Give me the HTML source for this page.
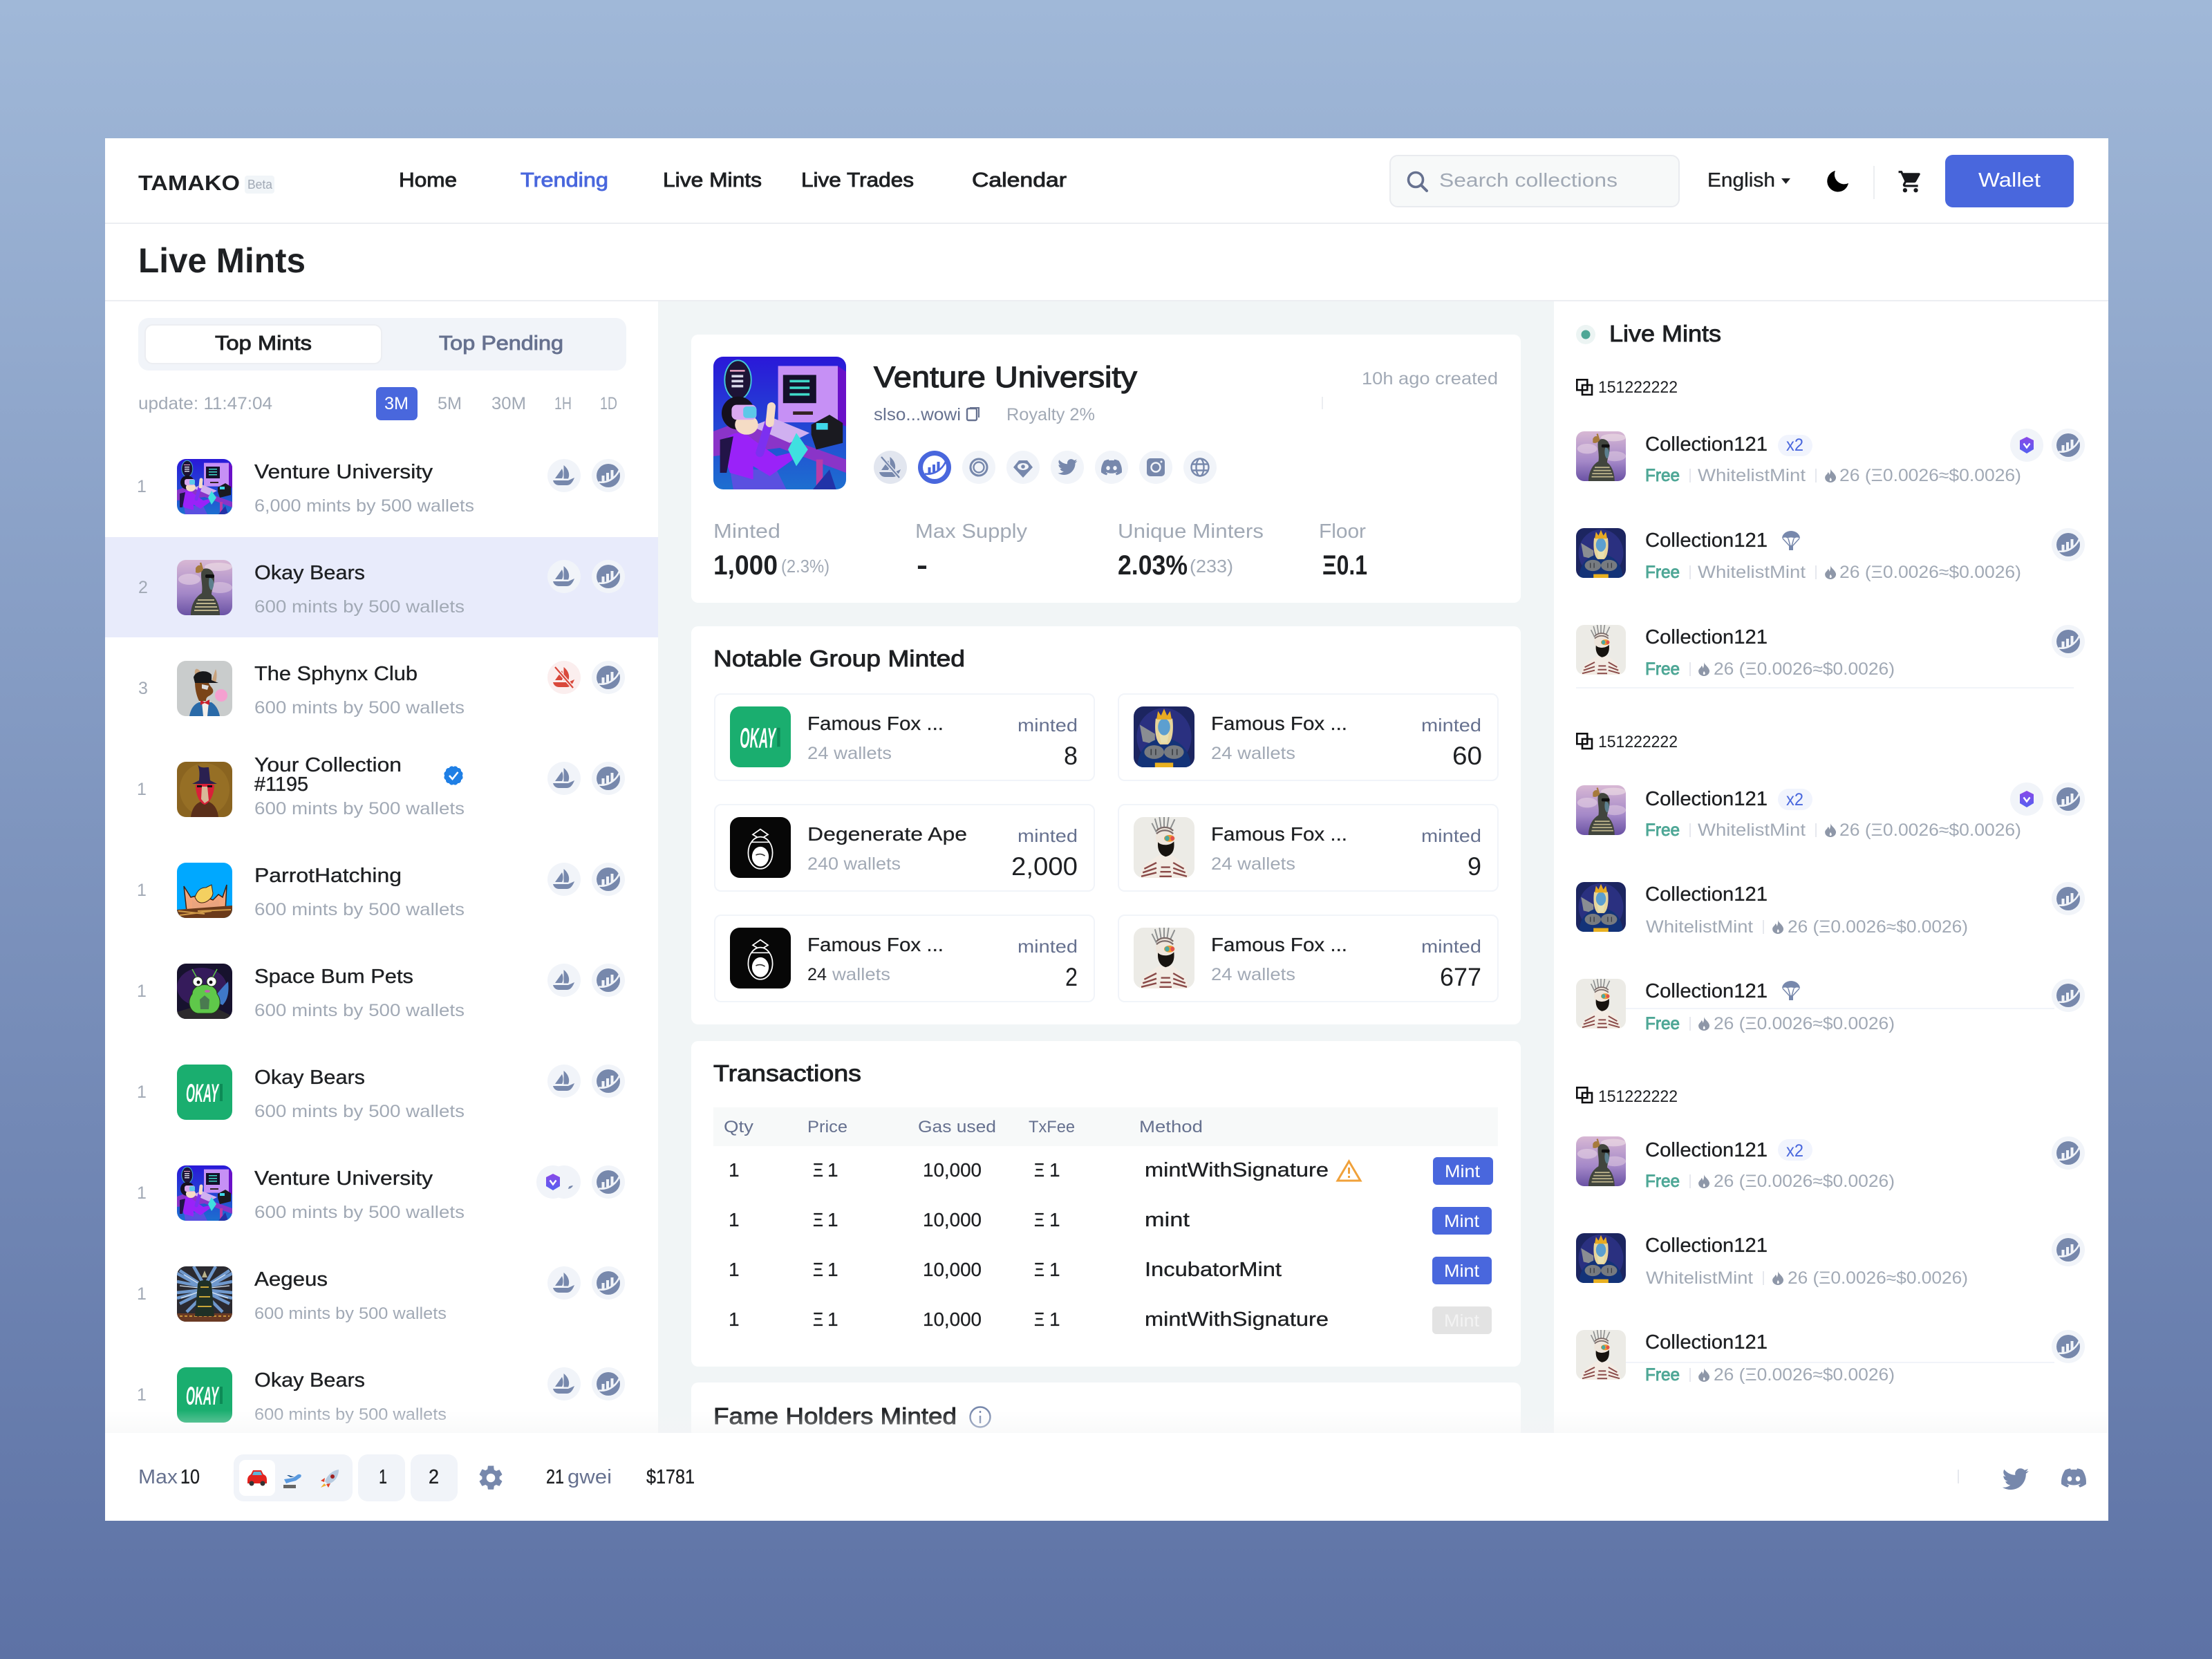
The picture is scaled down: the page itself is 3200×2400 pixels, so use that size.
<!DOCTYPE html>
<html><head><meta charset="utf-8"><title>Tamako Live Mints</title>
<style>
html,body{margin:0;padding:0;background:#7d93bf}
svg{display:block}
text{font-family:"Liberation Sans",sans-serif;white-space:pre}
.d{color:#1e2023;fill:currentColor}
.g{color:#a1a9b5;fill:currentColor}
.s{color:#66718f;fill:currentColor}
.b{color:#4967dd;fill:currentColor}
.w{color:#fff;fill:currentColor}
.n{color:#4ea796;fill:currentColor}
.d.f29{stroke:currentColor;stroke-width:.35px}
.d.f28{stroke:currentColor;stroke-width:.25px}
.m,.d.m{stroke:currentColor;stroke-width:.9px}
.h{font-weight:700}
.f18{font-size:18px}.f24{font-size:24px}.f25{font-size:25px}.f26{font-size:26px}.f28{font-size:28px}.f29{font-size:29px}.f32{font-size:33px}.f36{font-size:37px}.f39{font-size:40px}.f42{font-size:43px}.f49{font-size:50px}
</style></head><body>
<svg xmlns="http://www.w3.org/2000/svg" width="3200" height="2400" viewBox="0 0 3200 2400">
<defs>
<linearGradient id="bg" x1="0" y1="0" x2="0" y2="1"><stop offset="0" stop-color="#a0b8d8"/><stop offset="1" stop-color="#5d72a5"/></linearGradient>
<linearGradient id="fade" x1="0" y1="0" x2="0" y2="1"><stop offset="0" stop-color="#f3f4f5" stop-opacity="0"/><stop offset="1" stop-color="#f3f4f5" stop-opacity=".5"/></linearGradient>
<linearGradient id="gv" x1="0" y1="0" x2="0" y2="1"><stop offset="0" stop-color="#2a18d8"/><stop offset="1" stop-color="#1d6fd0"/></linearGradient>
<linearGradient id="gb" x1="0" y1="0" x2="0" y2="1"><stop offset="0" stop-color="#d8b8d4"/><stop offset=".6" stop-color="#a488c8"/><stop offset="1" stop-color="#6a52a4"/></linearGradient>
<linearGradient id="gp" x1="0" y1="0" x2="0" y2="1"><stop offset="0" stop-color="#8a48e8"/><stop offset="1" stop-color="#5460f0"/></linearGradient>
<clipPath id="c"><rect width="80" height="80" rx="13"/></clipPath>
<clipPath id="cbig"><rect x="1032" y="516" width="192" height="192" rx="14"/></clipPath>

<g id="vu">
<rect width="80" height="80" fill="url(#gv)"/>
<ellipse cx="14.800" cy="14" rx="8" ry="11.800" fill="#1d1336" stroke="#45c8d8" stroke-width=".8"/>
<rect x="10" y="8" width="9" height="1" fill="#f0a8c8"/><rect x="11" y="11" width="7" height="1.500" fill="#d8d8e8"/><rect x="11" y="14" width="7" height="1.500" fill="#d8d8e8"/><rect x="11" y="17" width="7" height="1.500" fill="#d8d8e8"/>
<rect x="39" y="5.600" width="36" height="34" fill="#c690f5"/><polygon points="75,5.600 80,9 80,42 75,40" fill="#6a10c8"/>
<rect x="42" y="11" width="20" height="17" fill="#14102a"/><rect x="46" y="14" width="12" height="1.500" fill="#3fd8c8"/><rect x="46" y="18" width="12" height="1.500" fill="#3fd8c8"/><rect x="46" y="22" width="12" height="1.500" fill="#3fd8c8"/>
<rect x="48" y="33" width="12" height="2" fill="#322"/>
<polygon points="0,45 16,39 80,62 80,70 40,55 0,60" fill="#8a34c8"/><rect x="62" y="62" width="4" height="18" fill="#b83ca8"/>
<polygon points="23,42 36,37 58,46 46,52" fill="#d0b0f0"/>
<polygon points="59,41 70,35 78,40 78,52 62,56 59,47" fill="#1a1a20"/><rect x="62" y="40" width="7" height="4" fill="#3fd8e8"/>
<path d="M10 68L38 68L44 80L12 80Z" fill="#5a50e0"/>
<path d="M5 56C7 44 18 44 24 50L38 60L46 58L48 62L34 72L24 66L24 74L10 70Z" fill="#9a22f8"/>
<path d="M4 50L12 48L8 70L4 70Z" fill="#221448"/>
<circle cx="15" cy="34" r="10" fill="#15101e"/><ellipse cx="20" cy="41" rx="7" ry="6" fill="#f5dcc5"/><rect x="11" y="29" width="15" height="9" rx="3" fill="#d9a8f0"/><rect x="18" y="30" width="8" height="7" rx="2" fill="#5cc8e8"/>
<path d="M28 58L34 38" stroke="#7c30f0" stroke-width="5" stroke-linecap="round"/><path d="M34 40L35 30" stroke="#f5dcc5" stroke-width="5" stroke-linecap="round"/>
<polygon points="50,46 57,56 50,66 45,56" fill="#3fe0e0"/>
<path d="M60 80L70 68L74 80Z" fill="#2233a8"/>
</g>

<symbol id="t-v" viewBox="0 0 80 80"><g clip-path="url(#c)"><use href="#vu"/></g></symbol>

<symbol id="t-b" viewBox="0 0 80 80"><g clip-path="url(#c)">
<rect width="80" height="80" fill="url(#gb)"/>
<ellipse cx="18" cy="28" rx="16" ry="8" fill="#e6d2e4" opacity=".6"/><ellipse cx="62" cy="40" rx="18" ry="8" fill="#e6d2e4" opacity=".5"/><ellipse cx="60" cy="10" rx="20" ry="6" fill="#efe0e6" opacity=".6"/>
<path d="M36 14C46 9 54 16 54 26C54 38 50 44 50 50C58 56 62 68 62 80H20C20 66 26 54 36 48C38 36 33 24 36 14Z" fill="#41453d"/>
<path d="M47 26C54 26 55 38 50 44C46 42 45 32 47 26Z" fill="#5c7f8e"/>
<path d="M27 12C30 6 36 6 38 14C36 18 30 20 27 18Z" fill="#a67a3c"/><path d="M34 4L37 14" stroke="#a67a3c" stroke-width="2.500"/>
<rect x="41" y="21" width="13" height="5" rx="2" fill="#0f0f0f"/>
<path d="M30 58H54M28 63H56M26 68H58M25 73H60" stroke="#bdb48c" stroke-width="2"/>
</g></symbol>

<symbol id="t-s" viewBox="0 0 80 80"><g clip-path="url(#c)">
<rect width="80" height="80" fill="#c9cccc"/>
<path d="M18 80C20 68 26 62 32 60L50 60C56 64 60 70 62 80Z" fill="#2a6aa8"/>
<path d="M36 60L46 60L44 80L38 80Z" fill="#f3eee8"/><path d="M34 56L40 60L47 56L47 64L40 61L34 64Z" fill="#c8202c"/>
<path d="M26 30C28 22 44 22 46 32C48 38 54 40 52 46C48 52 42 50 42 58L32 58C28 50 26 40 26 30Z" fill="#7a4418"/>
<path d="M28 26C24 16 26 10 30 12C34 14 36 18 35 22Z" fill="#c8a27c"/><path d="M50 30L56 12C58 16 58 24 56 32Z" fill="#c8a27c"/>
<path d="M24 24C26 14 44 12 50 20L50 28L60 32L26 32Z" fill="#17181a"/>
<path d="M36 34L46 36L44 42L36 40Z" fill="#ddd"/>
<circle cx="64" cy="50" r="9" fill="#f4a0d0"/>
</g></symbol>

<symbol id="t-w" viewBox="0 0 80 80"><g clip-path="url(#c)">
<rect width="80" height="80" fill="#8a6420"/><ellipse cx="40" cy="40" rx="36" ry="38" fill="#9b7428" opacity=".7"/>
<path d="M20 80C22 64 30 58 40 56C50 58 58 64 60 80Z" fill="#5a2f1a"/>
<path d="M27 34C30 30 50 30 54 34C54 46 48 60 40 62C32 60 27 46 27 34Z" fill="#d92038"/>
<path d="M36 36L44 36L46 56L40 60L35 54Z" fill="#d8b898"/>
<path d="M22 32L58 32L48 27L46 8C40 8 34 10 30 4C34 14 32 24 32 27Z" fill="#2a2050"/>
<rect x="29" y="34" width="7" height="3" fill="#111"/><rect x="44" y="34" width="7" height="3" fill="#111"/>
</g></symbol>

<symbol id="t-p" viewBox="0 0 80 80"><g clip-path="url(#c)">
<rect width="80" height="80" fill="#00a8ff"/>
<path d="M10 34L20 50L28 48L34 56L42 50L52 54L60 46L66 50L72 32L70 70H14Z" fill="#f2a67c" stroke="#3a2010" stroke-width="1.500"/>
<path d="M26 50C30 38 36 36 42 36L50 32L52 44C52 50 44 58 36 58C30 58 28 54 26 50Z" fill="#f4d060" stroke="#3a2010" stroke-width="1"/>
<path d="M22 54C30 62 52 62 60 52L62 66L22 66Z" fill="#eaa47e"/>
<path d="M0 68L80 62V80H0Z" fill="#6b3a1a"/><path d="M2 70L40 74M30 70L78 68M4 76L50 70" stroke="#d09a48" stroke-width="2"/>
</g></symbol>

<symbol id="t-f" viewBox="0 0 80 80"><g clip-path="url(#c)">
<rect width="80" height="80" fill="#17122e"/><ellipse cx="36" cy="34" rx="36" ry="28" fill="#3d1e66" opacity=".8"/>
<path d="M58 44C64 36 70 30 74 26C76 44 72 54 66 60L58 56Z" fill="#3f78c8"/>
<path d="M0 70L20 64L60 66L80 76V80H0Z" fill="#2c2a2c"/>
<path d="M22 44C22 26 58 26 58 44C66 54 62 70 50 72H30C18 70 14 54 22 44Z" fill="#5fc84a" stroke="#1e3a16" stroke-width="1"/>
<path d="M33 52L40 46L47 52L46 66H34Z" fill="#4a7a50"/>
<circle cx="30" cy="26" r="7" fill="#fff" stroke="#1e3a16"/><circle cx="50" cy="26" r="7" fill="#fff" stroke="#1e3a16"/><circle cx="31" cy="27" r="2.500" fill="#111"/><circle cx="49" cy="27" r="2.500" fill="#111"/>
<path d="M28 19L22 8M52 19L58 8" stroke="#5fc84a" stroke-width="1.500"/>
<ellipse cx="44" cy="40" rx="4" ry="2" fill="#c060b0"/>
</g></symbol>

<symbol id="t-o" viewBox="0 0 80 80"><g clip-path="url(#c)">
<rect width="80" height="80" fill="#1aae6f"/>
<text x="13" y="54" font-size="37" font-weight="700" font-style="italic" fill="#fff" textLength="47" lengthAdjust="spacingAndGlyphs">OKAY</text>
<rect x="62" y="28" width="4" height="25" fill="#0d8a56"/>
</g></symbol>

<symbol id="t-a" viewBox="0 0 80 80"><g clip-path="url(#c)">
<rect width="80" height="80" fill="#2b2a30"/>
<g stroke="#6f98cc" stroke-width="4.500" fill="none"><path d="M40 30L4 6M40 30L0 22M40 34L0 38M40 36L4 54M42 38L14 66M40 30L76 6M40 30L80 22M40 34L80 38M40 36L76 54M38 38L66 66M40 28L24 0M40 28L56 0M40 32L0 10M40 32L80 10M40 36L0 46M40 36L80 46"/></g>
<g stroke="#dce8f6" stroke-width="1.200"><path d="M40 30L10 12M40 34L6 46M40 30L70 12M40 34L74 46M40 32L4 28M40 32L76 28"/></g>
<rect x="0" y="68" width="80" height="12" fill="#6a3a24"/><path d="M4 72H76" stroke="#c8943a" stroke-width="2" stroke-dasharray="4 3"/>
<path d="M30 26C30 18 50 18 50 26L54 72H26Z" fill="#1f3026"/><path d="M34 30H46M32 44H48M30 58H50" stroke="#c8a438" stroke-width="2"/><polygon points="40,6 44,16 36,16" fill="#b8b08a"/>
</g></symbol>

<symbol id="t-k" viewBox="0 0 80 80"><g clip-path="url(#c)">
<rect width="80" height="80" fill="#1c2560"/><ellipse cx="40" cy="40" rx="36" ry="38" fill="#2a3080"/>
<polygon points="8,24 28,36 28,50 12,46" fill="#8a8d92"/>
<path d="M5 80C5 54 24 42 40 42C56 42 75 54 75 80Z" fill="#133378"/>
<path d="M29 16C27 30 29 46 35 50H45C51 46 53 30 51 16Z" fill="#e8d59a"/>
<ellipse cx="40" cy="27" rx="8" ry="11" fill="#5c9fd0"/><path d="M33 32C36 40 44 40 47 32L44 48H36Z" fill="#e8e0b0"/>
<polygon points="30,17 32,6 36,12 40,3 44,12 48,6 50,17" fill="#e8aa22"/>
<ellipse cx="27" cy="60" rx="13" ry="9" fill="#777b80"/><ellipse cx="53" cy="60" rx="13" ry="9" fill="#777b80"/><path d="M23 56V64M29 56V64M51 56V64M57 56V64" stroke="#3c3f44" stroke-width="1.500"/>
<rect x="28" y="74" width="24" height="6" fill="#e8b020"/>
</g></symbol>

<symbol id="t-z" viewBox="0 0 80 80"><g clip-path="url(#c)">
<rect width="80" height="80" fill="#ecebe6"/>
<path d="M32 16L28 2M36 14L34 0M40 13V0M44 14L46 0M48 16L54 3M30 20L24 8" stroke="#8e9090" stroke-width="1.800"/>
<path d="M8 80C8 64 24 56 34 50H50C60 56 72 64 72 80Z" fill="#f3ece4"/>
<path d="M14 68L30 60M12 73L30 67M10 78L30 73M66 68L52 60M68 73L52 67M70 78L52 73M34 78H50M35 72H49M36 66H48" stroke="#8a4a48" stroke-width="2.200"/>
<ellipse cx="41" cy="27" rx="12" ry="13" fill="#efe6dc"/>
<path d="M30 22C36 16 46 16 52 22M30 18C36 12 46 12 52 18" stroke="#7a6a68" stroke-width="2" fill="none"/>
<ellipse cx="47" cy="28" rx="7" ry="4.500" fill="#f09a30"/><ellipse cx="44" cy="28" rx="3" ry="3.500" fill="#4aa8a0"/><ellipse cx="51" cy="28" rx="2.500" ry="3" fill="#e05050"/>
<path d="M32 33C36 38 48 38 53 32C54 42 52 50 42 52C34 50 31 42 32 33Z" fill="#17130f"/>
</g></symbol>

<symbol id="t-e" viewBox="0 0 80 80"><g clip-path="url(#c)">
<rect width="80" height="80" fill="#070707"/>
<polygon points="40,16 50,23 40,29 30,23" fill="#070707" stroke="#fff" stroke-width="1.600"/>
<ellipse cx="40" cy="47" rx="16" ry="21" fill="#070707" stroke="#fff" stroke-width="1.600"/>
<ellipse cx="40" cy="52" rx="11" ry="13" fill="#fff"/>
<path d="M34 50Q40 47 46 51" stroke="#333" stroke-width="1.400" fill="none"/><path d="M28 33H52" stroke="#fff" stroke-width="1.400"/>
</g></symbol>

<path id="tw" d="M23 4.600a9 9 0 0 1-2.600.7A4.500 4.500 0 0 0 22.400 2.800a9 9 0 0 1-2.900 1.100A4.500 4.500 0 0 0 11.800 8 12.800 12.800 0 0 1 2.500 3.300a4.500 4.500 0 0 0 1.400 6 4.500 4.500 0 0 1-2-.6v.1a4.500 4.500 0 0 0 3.600 4.400 4.500 4.500 0 0 1-2 .1 4.500 4.500 0 0 0 4.200 3.100A9 9 0 0 1 1 18.300a12.700 12.700 0 0 0 6.900 2c8.300 0 12.800-6.900 12.800-12.800v-.6A9 9 0 0 0 23 4.600z"/>
<path id="dc" d="M20.317 4.370a19.791 19.791 0 0 0-4.885-1.515.074.074 0 0 0-.079.037c-.21.375-.444.864-.608 1.250a18.270 18.270 0 0 0-5.487 0 12.640 12.640 0 0 0-.617-1.250.077.077 0 0 0-.079-.037A19.736 19.736 0 0 0 3.677 4.370a.07.07 0 0 0-.032.027C.533 9.046-.32 13.580.099 18.057a.082.082 0 0 0 .031.057 19.900 19.900 0 0 0 5.993 3.030.078.078 0 0 0 .084-.028 14.090 14.090 0 0 0 1.226-1.994.076.076 0 0 0-.041-.106 13.107 13.107 0 0 1-1.872-.892.077.077 0 0 1-.008-.128 10.200 10.200 0 0 0 .372-.292.074.074 0 0 1 .077-.01c3.928 1.793 8.180 1.793 12.062 0a.074.074 0 0 1 .078.01c.12.098.246.198.373.292a.077.077 0 0 1-.006.127 12.299 12.299 0 0 1-1.873.892.077.077 0 0 0-.041.107c.36.698.772 1.362 1.225 1.993a.076.076 0 0 0 .084.028 19.839 19.839 0 0 0 6.002-3.030.077.077 0 0 0 .032-.054c.5-5.177-.838-9.674-3.549-13.660a.061.061 0 0 0-.031-.03zM8.020 15.330c-1.183 0-2.157-1.085-2.157-2.419 0-1.333.956-2.419 2.157-2.419 1.210 0 2.176 1.096 2.157 2.420 0 1.333-.956 2.418-2.157 2.418zm7.975 0c-1.183 0-2.157-1.085-2.157-2.419 0-1.333.955-2.419 2.157-2.419 1.210 0 2.176 1.096 2.157 2.420 0 1.333-.946 2.418-2.157 2.418z"/>
<g id="boat"><path d="M11 28L21 14C23 19 23 24 21 28Z"/><path d="M23.500 9C30 14 33 22 30 28.500H23.500Z"/><path d="M8 31H30L39 27C37 32 34 38 28 38H17C12 38 9 35 8 31Z"/></g>

<symbol id="os" viewBox="0 0 48 48"><circle cx="24" cy="24" r="24" fill="#f1f4f9"/><use href="#boat" fill="#7788ac"/></symbol>
<symbol id="osr" viewBox="0 0 48 48"><circle cx="24" cy="24" r="24" fill="#fbeeee"/><use href="#boat" fill="#d9483b"/><path d="M11 9L37 39" stroke="#fbeeee" stroke-width="5"/><path d="M11 9L37 39" stroke="#d9483b" stroke-width="2.200"/></symbol>
<symbol id="osg" viewBox="0 0 48 48"><circle cx="24" cy="24" r="24" fill="#e2e6ef"/><use href="#boat" fill="#7788ac"/><path d="M11 9L37 39" stroke="#e2e6ef" stroke-width="5"/><path d="M11 9L37 39" stroke="#7788ac" stroke-width="2.200"/></symbol>
<symbol id="cw" viewBox="0 0 48 48"><circle cx="24" cy="24" r="24" fill="#f1f4f9"/><circle cx="24" cy="24" r="17" fill="#7788ac"/><path d="M14.500 24h4v9h-4zM21 20h4v11h-4zM27.500 16h4v13h-4z" fill="#f1f4f9"/><path d="M10 33.500C22 35 34 29 40 16" stroke="#f1f4f9" stroke-width="2.600" fill="none"/></symbol>
<symbol id="cwb" viewBox="0 0 48 48"><circle cx="24" cy="24" r="24" fill="#4967dd"/><circle cx="24" cy="24" r="17" fill="#fff"/><path d="M14.500 24h4v9h-4zM21 20h4v11h-4zM27.500 16h4v13h-4z" fill="#4967dd"/><path d="M10 33.500C22 35 34 29 40 16" stroke="#4967dd" stroke-width="2.600" fill="none"/></symbol>
<symbol id="sh" viewBox="0 0 48 48"><circle cx="24" cy="24" r="24" fill="#f1f4f9"/><path d="M24 12L34 17V30L24 36L14 30V17Z" fill="url(#gp)"/><path d="M19.500 21.500L24 27.500L28.500 21.500" stroke="#fff" stroke-width="2.400" fill="none"/></symbol>
<symbol id="fl" viewBox="0 0 16 20"><path d="M8 0C9 4 15 7 16 12C16.500 17 12 20 8 20C4 20 -.5 17 .2 12C.8 9 4 8 4.500 5C6 6 6.500 8 6.700 9C8 6 8.500 3 8 0ZM8 13C7 15 6.600 16 7 17.500C8 18.500 9.500 18 9.800 16.500C9.800 15 9 14 8 13Z" fill="#8e97a8" fill-rule="evenodd"/></symbol>
<symbol id="pa" viewBox="0 0 26 28"><path d="M0 11A13 11 0 0 1 26 11C23 9 20 9 18 11C16 9 10 9 8 11C6 9 3 9 0 11Z" fill="#7788ac"/><path d="M1 11L11 22M9 11L12 22M17 11L14 22M25 11L15 22" stroke="#7788ac" stroke-width="1.500"/><rect x="10" y="21" width="6" height="7" fill="#7788ac"/></symbol>
<g id="grp" fill="none" stroke="#0e0e10" stroke-width="2.600"><rect x="1.300" y="1.300" width="15" height="15"/><rect x="9" y="9" width="14" height="14"/></g>
</defs>

<rect width="3200" height="2400" fill="url(#bg)"/>
<rect x="152" y="200" width="2898" height="2000" fill="#fff"/>

<!-- header -->
<text x="200" y="275" textLength="147" lengthAdjust="spacingAndGlyphs" class="d h" font-size="31">TAMAKO</text>
<rect x="354" y="254" width="43" height="26" rx="4" fill="#f1f5f8"/>
<text x="358" y="273" textLength="36" lengthAdjust="spacingAndGlyphs" class="g f18">Beta</text>
<text x="577" y="270" textLength="84" lengthAdjust="spacingAndGlyphs" class="d m f29">Home</text>
<text x="753" y="270" textLength="127" lengthAdjust="spacingAndGlyphs" class="b m f29">Trending</text>
<text x="959" y="270" textLength="143" lengthAdjust="spacingAndGlyphs" class="d m f29">Live Mints</text>
<text x="1159" y="270" textLength="163" lengthAdjust="spacingAndGlyphs" class="d m f29">Live Trades</text>
<text x="1406" y="270" textLength="137" lengthAdjust="spacingAndGlyphs" class="d m f29">Calendar</text>

<rect x="2011" y="225" width="418" height="74" rx="11" fill="#f7f9f9" stroke="#e9ebef" stroke-width="2"/>
<circle cx="2048" cy="260" r="10.500" fill="none" stroke="#66718f" stroke-width="3.600"/><path d="M2056 268L2064 276" stroke="#66718f" stroke-width="4" stroke-linecap="round"/>
<text x="2082" y="270" textLength="258" lengthAdjust="spacingAndGlyphs" class="g f28">Search collections</text>
<text x="2470" y="270" textLength="98" lengthAdjust="spacingAndGlyphs" class="d f29">English</text>
<path d="M2577 258H2590L2583.500 266Z" fill="#1e2023"/>
<path d="M2655 247A15.500 15.500 0 1 0 2674 265A14 14 0 0 1 2655 247Z" fill="#000"/>
<rect x="2710" y="240" width="2" height="48" fill="#eceef1"/>
<path transform="translate(2745 244) scale(1.560)" fill="#17181c" d="M7 18c-1.100 0-1.990.9-1.990 2S5.900 22 7 22s2-.9 2-2-.9-2-2-2zM1 2v2h2l3.600 7.590-1.350 2.450c-.16.28-.25.61-.25.96 0 1.100.9 2 2 2h12v-2H7.420c-.14 0-.25-.11-.25-.25l.03-.12.9-1.630h7.450c.75 0 1.410-.41 1.750-1.030l3.580-6.470A1 1 0 0 0 20 4H5.210l-.94-2H1zm16 16c-1.100 0-1.990.9-1.990 2s.89 2 1.990 2 2-.9 2-2-.9-2-2-2z"/>
<rect x="2814" y="224" width="186" height="76" rx="11" fill="#4967dd"/>
<text x="2862" y="270" textLength="90" lengthAdjust="spacingAndGlyphs" class="w f29">Wallet</text>

<rect x="152" y="322" width="2898" height="2" fill="#eceef2"/>
<text x="200" y="394" textLength="242" lengthAdjust="spacingAndGlyphs" class="d h f49">Live Mints</text>
<rect x="152" y="434" width="2898" height="2" fill="#eceef2"/>

<!-- middle bg -->
<rect x="952" y="436" width="1296" height="1640" fill="#f1f5f6"/>

<!-- left column -->
<rect x="200" y="460" width="706" height="76" rx="15" fill="#f1f4f9"/>
<rect x="210" y="470" width="342" height="56" rx="11" fill="#fff" stroke="#eceef2" stroke-width="2"/>
<text x="311" y="506" textLength="140" lengthAdjust="spacingAndGlyphs" class="d m f29">Top Mints</text>
<text x="635" y="506" textLength="180" lengthAdjust="spacingAndGlyphs" class="s m f29">Top Pending</text>
<text x="200" y="592" textLength="194" lengthAdjust="spacingAndGlyphs" class="g f25">update: 11:47:04</text>
<rect x="544" y="560" width="60" height="48" rx="7" fill="#4967dd"/>
<text x="556" y="592" textLength="35" lengthAdjust="spacingAndGlyphs" class="w f25">3M</text>
<text x="633" y="592" textLength="35" lengthAdjust="spacingAndGlyphs" class="g f25">5M</text>
<text x="711" y="592" textLength="50" lengthAdjust="spacingAndGlyphs" class="g f25">30M</text>
<text x="802" y="592" textLength="25" lengthAdjust="spacingAndGlyphs" class="g f25">1H</text>
<text x="868" y="592" textLength="25" lengthAdjust="spacingAndGlyphs" class="g f25">1D</text>

<rect x="152" y="777" width="800" height="145" fill="#e8ebfb"/>

<text x="198" y="712" class="g f25">1</text>
<use href="#t-v" x="256" y="664" width="80" height="80"/>
<text x="368" y="692" textLength="258" lengthAdjust="spacingAndGlyphs" class="d f29">Venture University</text>
<text x="368" y="740" textLength="318" lengthAdjust="spacingAndGlyphs" class="g f25">6,000 mints by 500 wallets</text>
<use href="#os" x="792" y="664" width="48" height="48"/><use href="#cw" x="856" y="664" width="48" height="48"/>

<text x="200" y="858" class="g f25">2</text>
<use href="#t-b" x="256" y="810" width="80" height="80"/>
<text x="368" y="838" textLength="160" lengthAdjust="spacingAndGlyphs" class="d f29">Okay Bears</text>
<text x="368" y="886" textLength="304" lengthAdjust="spacingAndGlyphs" class="g f25">600 mints by 500 wallets</text>
<use href="#os" x="792" y="810" width="48" height="48"/><use href="#cw" x="856" y="810" width="48" height="48"/>

<text x="200" y="1004" class="g f25">3</text>
<use href="#t-s" x="256" y="956" width="80" height="80"/>
<text x="368" y="984" textLength="236" lengthAdjust="spacingAndGlyphs" class="d f29">The Sphynx Club</text>
<text x="368" y="1032" textLength="304" lengthAdjust="spacingAndGlyphs" class="g f25">600 mints by 500 wallets</text>
<use href="#osr" x="792" y="956" width="48" height="48"/><use href="#cw" x="856" y="956" width="48" height="48"/>

<text x="198" y="1150" class="g f25">1</text>
<use href="#t-w" x="256" y="1102" width="80" height="80"/>
<text x="368" y="1116" textLength="213" lengthAdjust="spacingAndGlyphs" class="d f29">Your Collection</text>
<text x="368" y="1144" textLength="78" lengthAdjust="spacingAndGlyphs" class="d f29">#1195</text>
<g fill="#1f7fe5"><rect x="645" y="1111" width="22" height="22" rx="4"/><rect x="645" y="1111" width="22" height="22" rx="4" transform="rotate(30 656 1122)"/><rect x="645" y="1111" width="22" height="22" rx="4" transform="rotate(60 656 1122)"/></g>
<path d="M650 1122L654.500 1127L662.500 1117" stroke="#fff" stroke-width="2.600" fill="none"/>
<text x="368" y="1178" textLength="304" lengthAdjust="spacingAndGlyphs" class="g f25">600 mints by 500 wallets</text>
<use href="#os" x="792" y="1102" width="48" height="48"/><use href="#cw" x="856" y="1102" width="48" height="48"/>

<text x="198" y="1296" class="g f25">1</text>
<use href="#t-p" x="256" y="1248" width="80" height="80"/>
<text x="368" y="1276" textLength="213" lengthAdjust="spacingAndGlyphs" class="d f29">ParrotHatching</text>
<text x="368" y="1324" textLength="304" lengthAdjust="spacingAndGlyphs" class="g f25">600 mints by 500 wallets</text>
<use href="#os" x="792" y="1248" width="48" height="48"/><use href="#cw" x="856" y="1248" width="48" height="48"/>

<text x="198" y="1442" class="g f25">1</text>
<use href="#t-f" x="256" y="1394" width="80" height="80"/>
<text x="368" y="1422" textLength="230" lengthAdjust="spacingAndGlyphs" class="d f29">Space Bum Pets</text>
<text x="368" y="1470" textLength="304" lengthAdjust="spacingAndGlyphs" class="g f25">600 mints by 500 wallets</text>
<use href="#os" x="792" y="1394" width="48" height="48"/><use href="#cw" x="856" y="1394" width="48" height="48"/>

<text x="198" y="1588" class="g f25">1</text>
<use href="#t-o" x="256" y="1540" width="80" height="80"/>
<text x="368" y="1568" textLength="160" lengthAdjust="spacingAndGlyphs" class="d f29">Okay Bears</text>
<text x="368" y="1616" textLength="304" lengthAdjust="spacingAndGlyphs" class="g f25">600 mints by 500 wallets</text>
<use href="#os" x="792" y="1540" width="48" height="48"/><use href="#cw" x="856" y="1540" width="48" height="48"/>

<text x="198" y="1734" class="g f25">1</text>
<use href="#t-v" x="256" y="1686" width="80" height="80"/>
<text x="368" y="1714" textLength="258" lengthAdjust="spacingAndGlyphs" class="d f29">Venture University</text>
<text x="368" y="1762" textLength="304" lengthAdjust="spacingAndGlyphs" class="g f25">600 mints by 500 wallets</text>
<circle cx="816" cy="1710" r="24" fill="#f1f4f9"/><path d="M820 1720Q823 1715 829 1715Q827 1720 820 1720Z" fill="#7788ac"/>
<use href="#sh" x="776" y="1686" width="48" height="48"/><use href="#cw" x="856" y="1686" width="48" height="48"/>

<text x="198" y="1880" class="g f25">1</text>
<use href="#t-a" x="256" y="1832" width="80" height="80"/>
<text x="368" y="1860" textLength="106" lengthAdjust="spacingAndGlyphs" class="d f29">Aegeus</text>
<text x="368" y="1908" textLength="278" lengthAdjust="spacingAndGlyphs" class="g f24">600 mints by 500 wallets</text>
<use href="#os" x="792" y="1832" width="48" height="48"/><use href="#cw" x="856" y="1832" width="48" height="48"/>

<text x="198" y="2026" class="g f25">1</text>
<use href="#t-o" x="256" y="1978" width="80" height="80"/>
<text x="368" y="2006" textLength="160" lengthAdjust="spacingAndGlyphs" class="d f29">Okay Bears</text>
<text x="368" y="2054" textLength="278" lengthAdjust="spacingAndGlyphs" class="g f24">600 mints by 500 wallets</text>
<use href="#os" x="792" y="1978" width="48" height="48"/><use href="#cw" x="856" y="1978" width="48" height="48"/>

<!-- card 1 -->
<rect x="1000" y="484" width="1200" height="388" rx="10" fill="#fff"/>
<g clip-path="url(#cbig)"><use href="#vu" transform="translate(1032 516) scale(2.400)"/></g>
<text x="1264" y="560" textLength="381" lengthAdjust="spacingAndGlyphs" class="d m f42" style="stroke-width:1.200px">Venture University</text>
<text x="1264" y="608" textLength="126" lengthAdjust="spacingAndGlyphs" class="s f25">slso...wowi</text>
<rect x="1399" y="591" width="14" height="17" rx="2" fill="none" stroke="#66718f" stroke-width="2.400"/><path d="M1403 590H1416V604" fill="none" stroke="#66718f" stroke-width="2"/>
<text x="1456" y="608" textLength="128" lengthAdjust="spacingAndGlyphs" class="g f25">Royalty 2%</text>
<text x="1970" y="556" textLength="197" lengthAdjust="spacingAndGlyphs" class="g f25">10h ago created</text>
<rect x="1912" y="574" width="2" height="18" fill="#eceef1"/>

<use href="#osg" x="1264" y="652" width="48" height="48"/>
<use href="#cwb" x="1328" y="652" width="48" height="48"/>
<circle cx="1416" cy="676" r="24" fill="#f1f4f9"/><circle cx="1416" cy="676" r="12" fill="none" stroke="#7788ac" stroke-width="3"/><circle cx="1416" cy="676" r="7.500" fill="none" stroke="#7788ac" stroke-width="2.400"/><path d="M1404 676A12 12 0 0 0 1416 688" stroke="#7788ac" stroke-width="3" fill="none"/>
<circle cx="1480" cy="676" r="24" fill="#f1f4f9"/><path d="M1466 676L1474 666H1486L1494 676L1480 691Z" fill="#7788ac"/><ellipse cx="1480" cy="675" rx="8" ry="5" fill="#f1f4f9"/><circle cx="1480" cy="675" r="2.800" fill="#7788ac"/>
<circle cx="1544" cy="676" r="24" fill="#f1f4f9"/><use href="#tw" transform="translate(1529 661) scale(1.280)" fill="#7788ac"/>
<circle cx="1608" cy="676" r="24" fill="#f1f4f9"/><use href="#dc" transform="translate(1593 661) scale(1.250)" fill="#7788ac"/>
<circle cx="1672" cy="676" r="24" fill="#f1f4f9"/><rect x="1659" y="663" width="26" height="26" rx="5" fill="#7788ac"/><circle cx="1672" cy="676" r="6.500" fill="none" stroke="#f1f4f9" stroke-width="2.400"/><circle cx="1680" cy="668" r="1.500" fill="#f1f4f9"/>
<circle cx="1736" cy="676" r="24" fill="#f1f4f9"/><g fill="none" stroke="#7788ac" stroke-width="2.400"><circle cx="1736" cy="676" r="12.500"/><ellipse cx="1736" cy="676" rx="5.500" ry="12.500"/><path d="M1724 671.500H1748M1724 680.500H1748"/></g>

<text x="1032" y="778" textLength="97" lengthAdjust="spacingAndGlyphs" class="g f29">Minted</text>
<text x="1324" y="778" textLength="162" lengthAdjust="spacingAndGlyphs" class="g f29">Max Supply</text>
<text x="1617" y="778" textLength="211" lengthAdjust="spacingAndGlyphs" class="g f29">Unique Minters</text>
<text x="1908" y="778" textLength="68" lengthAdjust="spacingAndGlyphs" class="g f29">Floor</text>
<text x="1032" y="831" textLength="93" lengthAdjust="spacingAndGlyphs" class="d h f39">1,000</text>
<text x="1130" y="828" textLength="70" lengthAdjust="spacingAndGlyphs" class="g f26">(2.3%)</text>
<text x="1326" y="831" textLength="16" lengthAdjust="spacingAndGlyphs" class="d h f39">-</text>
<text x="1617" y="831" textLength="101" lengthAdjust="spacingAndGlyphs" class="d h f39">2.03%</text>
<text x="1721" y="828" textLength="63" lengthAdjust="spacingAndGlyphs" class="g f26">(233)</text>
<text x="1913" y="831" textLength="65" lengthAdjust="spacingAndGlyphs" class="d h f39">Ξ0.1</text>

<!-- notable -->
<rect x="1000" y="906" width="1200" height="576" rx="10" fill="#fff"/>
<text x="1032" y="964" textLength="364" lengthAdjust="spacingAndGlyphs" class="d m f32">Notable Group Minted</text>
<g fill="#fff" stroke="#f1f4f9" stroke-width="2">
<rect x="1034" y="1004" width="549" height="125" rx="9"/><rect x="1618" y="1004" width="549" height="125" rx="9"/>
<rect x="1034" y="1164" width="549" height="125" rx="9"/><rect x="1618" y="1164" width="549" height="125" rx="9"/>
<rect x="1034" y="1324" width="549" height="125" rx="9"/><rect x="1618" y="1324" width="549" height="125" rx="9"/>
</g>
<use href="#t-o" x="1056" y="1022" width="88" height="88"/>
<text x="1168" y="1056" textLength="197" lengthAdjust="spacingAndGlyphs" class="d f28">Famous Fox ...</text>
<text x="1168" y="1098" textLength="122" lengthAdjust="spacingAndGlyphs" class="g f25">24 wallets</text>
<text x="1472" y="1058" textLength="87" lengthAdjust="spacingAndGlyphs" class="s f26">minted</text>
<text x="1539" y="1106" textLength="20" lengthAdjust="spacingAndGlyphs" class="d f36">8</text>

<use href="#t-k" x="1640" y="1022" width="88" height="88"/>
<text x="1752" y="1056" textLength="197" lengthAdjust="spacingAndGlyphs" class="d f28">Famous Fox ...</text>
<text x="1752" y="1098" textLength="122" lengthAdjust="spacingAndGlyphs" class="g f25">24 wallets</text>
<text x="2056" y="1058" textLength="87" lengthAdjust="spacingAndGlyphs" class="s f26">minted</text>
<text x="2101" y="1106" textLength="43" lengthAdjust="spacingAndGlyphs" class="d f36">60</text>

<use href="#t-e" x="1056" y="1182" width="88" height="88"/>
<text x="1168" y="1216" textLength="231" lengthAdjust="spacingAndGlyphs" class="d f28">Degenerate Ape</text>
<text x="1168" y="1258" textLength="135" lengthAdjust="spacingAndGlyphs" class="g f25">240 wallets</text>
<text x="1472" y="1218" textLength="87" lengthAdjust="spacingAndGlyphs" class="s f26">minted</text>
<text x="1463" y="1266" textLength="96" lengthAdjust="spacingAndGlyphs" class="d f36">2,000</text>

<use href="#t-z" x="1640" y="1182" width="88" height="88"/>
<text x="1752" y="1216" textLength="197" lengthAdjust="spacingAndGlyphs" class="d f28">Famous Fox ...</text>
<text x="1752" y="1258" textLength="122" lengthAdjust="spacingAndGlyphs" class="g f25">24 wallets</text>
<text x="2056" y="1218" textLength="87" lengthAdjust="spacingAndGlyphs" class="s f26">minted</text>
<text x="2123" y="1266" textLength="20" lengthAdjust="spacingAndGlyphs" class="d f36">9</text>

<use href="#t-e" x="1056" y="1342" width="88" height="88"/>
<text x="1168" y="1376" textLength="197" lengthAdjust="spacingAndGlyphs" class="d f28">Famous Fox ...</text>
<text x="1168" y="1418" textLength="28" lengthAdjust="spacingAndGlyphs" class="d f25">24</text>
<text x="1204" y="1418" textLength="84" lengthAdjust="spacingAndGlyphs" class="g f25">wallets</text>
<text x="1472" y="1378" textLength="87" lengthAdjust="spacingAndGlyphs" class="s f26">minted</text>
<text x="1541" y="1426" textLength="18" lengthAdjust="spacingAndGlyphs" class="d f36">2</text>

<use href="#t-z" x="1640" y="1342" width="88" height="88"/>
<text x="1752" y="1376" textLength="197" lengthAdjust="spacingAndGlyphs" class="d f28">Famous Fox ...</text>
<text x="1752" y="1418" textLength="122" lengthAdjust="spacingAndGlyphs" class="g f25">24 wallets</text>
<text x="2056" y="1378" textLength="87" lengthAdjust="spacingAndGlyphs" class="s f26">minted</text>
<text x="2083" y="1426" textLength="60" lengthAdjust="spacingAndGlyphs" class="d f36">677</text>

<!-- transactions -->
<rect x="1000" y="1506" width="1200" height="471" rx="10" fill="#fff"/>
<text x="1032" y="1564" textLength="214" lengthAdjust="spacingAndGlyphs" class="d m f32">Transactions</text>
<rect x="1032" y="1602" width="1135" height="56" fill="#f7f9f9"/>
<text x="1047" y="1638" textLength="43" lengthAdjust="spacingAndGlyphs" class="s f24">Qty</text>
<text x="1168" y="1638" textLength="58" lengthAdjust="spacingAndGlyphs" class="s f24">Price</text>
<text x="1328" y="1638" textLength="113" lengthAdjust="spacingAndGlyphs" class="s f24">Gas used</text>
<text x="1488" y="1638" textLength="67" lengthAdjust="spacingAndGlyphs" class="s f24">TxFee</text>
<text x="1648" y="1638" textLength="92" lengthAdjust="spacingAndGlyphs" class="s f24">Method</text>

<text x="1054" y="1702" class="d f28">1</text><text x="1176" y="1702" textLength="15" lengthAdjust="spacingAndGlyphs" class="d f28">Ξ</text><text x="1197" y="1702" class="d f28">1</text><text x="1335" y="1702" textLength="85" lengthAdjust="spacingAndGlyphs" class="d f28">10,000</text><text x="1496" y="1702" textLength="15" lengthAdjust="spacingAndGlyphs" class="d f28">Ξ</text><text x="1518" y="1702" class="d f28">1</text>
<text x="1656" y="1702" textLength="266" lengthAdjust="spacingAndGlyphs" class="d f29">mintWithSignature</text>
<path d="M1951.500 1680L1968 1708H1935Z" fill="none" stroke="#f0a13a" stroke-width="3"/><path d="M1951.500 1689V1698M1951.500 1701V1704" stroke="#f0a13a" stroke-width="3"/>
<rect x="2073" y="1674" width="87" height="40" rx="6" fill="#4967dd"/><text x="2090" y="1703" textLength="51" lengthAdjust="spacingAndGlyphs" class="w f25">Mint</text>

<text x="1054" y="1774" class="d f28">1</text><text x="1176" y="1774" textLength="15" lengthAdjust="spacingAndGlyphs" class="d f28">Ξ</text><text x="1197" y="1774" class="d f28">1</text><text x="1335" y="1774" textLength="85" lengthAdjust="spacingAndGlyphs" class="d f28">10,000</text><text x="1496" y="1774" textLength="15" lengthAdjust="spacingAndGlyphs" class="d f28">Ξ</text><text x="1518" y="1774" class="d f28">1</text>
<text x="1656" y="1774" textLength="65" lengthAdjust="spacingAndGlyphs" class="d f29">mint</text>
<rect x="2072" y="1746" width="86" height="40" rx="6" fill="#4967dd"/><text x="2089" y="1775" textLength="51" lengthAdjust="spacingAndGlyphs" class="w f25">Mint</text>

<text x="1054" y="1846" class="d f28">1</text><text x="1176" y="1846" textLength="15" lengthAdjust="spacingAndGlyphs" class="d f28">Ξ</text><text x="1197" y="1846" class="d f28">1</text><text x="1335" y="1846" textLength="85" lengthAdjust="spacingAndGlyphs" class="d f28">10,000</text><text x="1496" y="1846" textLength="15" lengthAdjust="spacingAndGlyphs" class="d f28">Ξ</text><text x="1518" y="1846" class="d f28">1</text>
<text x="1656" y="1846" textLength="198" lengthAdjust="spacingAndGlyphs" class="d f29">IncubatorMint</text>
<rect x="2072" y="1818" width="86" height="40" rx="6" fill="#4967dd"/><text x="2089" y="1847" textLength="51" lengthAdjust="spacingAndGlyphs" class="w f25">Mint</text>

<text x="1054" y="1918" class="d f28">1</text><text x="1176" y="1918" textLength="15" lengthAdjust="spacingAndGlyphs" class="d f28">Ξ</text><text x="1197" y="1918" class="d f28">1</text><text x="1335" y="1918" textLength="85" lengthAdjust="spacingAndGlyphs" class="d f28">10,000</text><text x="1496" y="1918" textLength="15" lengthAdjust="spacingAndGlyphs" class="d f28">Ξ</text><text x="1518" y="1918" class="d f28">1</text>
<text x="1656" y="1918" textLength="266" lengthAdjust="spacingAndGlyphs" class="d f29">mintWithSignature</text>
<rect x="2072" y="1890" width="86" height="40" rx="6" fill="#e3e3e3"/><text x="2089" y="1919" textLength="51" lengthAdjust="spacingAndGlyphs" fill="#f3f3f3" class="f25">Mint</text>

<!-- fame -->
<rect x="1000" y="2000" width="1200" height="80" rx="10" fill="#fff"/>
<text x="1032" y="2060" textLength="352" lengthAdjust="spacingAndGlyphs" class="d m f32">Fame Holders Minted</text>
<circle cx="1418" cy="2050" r="14.500" fill="none" stroke="#7788ac" stroke-width="2.400"/><path d="M1418 2048V2059M1418 2041V2044" stroke="#7788ac" stroke-width="2.400"/>

<!-- right panel -->
<circle cx="2294" cy="484" r="14" fill="#ecf4f3"/><circle cx="2294" cy="484" r="6.500" fill="#4ea796"/>
<text x="2328" y="494" textLength="162" lengthAdjust="spacingAndGlyphs" class="d m f32">Live Mints</text>

<use href="#grp" transform="translate(2280 548)"/>
<text x="2312" y="568" textLength="115" lengthAdjust="spacingAndGlyphs" class="d f24">151222222</text>

<use href="#t-b" x="2280" y="624" width="72" height="72"/>
<text x="2380" y="652" textLength="177" lengthAdjust="spacingAndGlyphs" class="d f29">Collection121</text>
<rect x="2572" y="629" width="50" height="31" rx="15.500" fill="#f1f4fd"/><text x="2584" y="652" textLength="25" lengthAdjust="spacingAndGlyphs" class="b f25">x2</text>
<use href="#sh" x="2908" y="620" width="48" height="48"/><use href="#cw" x="2968" y="620" width="48" height="48"/>
<text x="2380" y="696" textLength="50" lengthAdjust="spacingAndGlyphs" class="n m f25">Free</text><rect x="2444" y="678" width="2" height="20" fill="#e6e8ee"/>
<text x="2456" y="696" textLength="156" lengthAdjust="spacingAndGlyphs" class="g f25">WhitelistMint</text><rect x="2626" y="678" width="2" height="20" fill="#e6e8ee"/>
<use href="#fl" x="2640" y="678" width="16" height="20"/><text x="2661" y="696" textLength="263" lengthAdjust="spacingAndGlyphs" class="g f25">26 (Ξ0.0026≈$0.0026)</text>

<use href="#t-k" x="2280" y="764" width="72" height="72"/>
<text x="2380" y="791" textLength="177" lengthAdjust="spacingAndGlyphs" class="d f29">Collection121</text>
<use href="#pa" x="2578" y="768" width="26" height="28"/>
<use href="#cw" x="2968" y="764" width="48" height="48"/>
<text x="2380" y="836" textLength="50" lengthAdjust="spacingAndGlyphs" class="n m f25">Free</text><rect x="2444" y="818" width="2" height="20" fill="#e6e8ee"/>
<text x="2456" y="836" textLength="156" lengthAdjust="spacingAndGlyphs" class="g f25">WhitelistMint</text><rect x="2626" y="818" width="2" height="20" fill="#e6e8ee"/>
<use href="#fl" x="2640" y="818" width="16" height="20"/><text x="2661" y="836" textLength="263" lengthAdjust="spacingAndGlyphs" class="g f25">26 (Ξ0.0026≈$0.0026)</text>

<use href="#t-z" x="2280" y="904" width="72" height="72"/>
<text x="2380" y="931" textLength="177" lengthAdjust="spacingAndGlyphs" class="d f29">Collection121</text>
<use href="#cw" x="2968" y="904" width="48" height="48"/>
<text x="2380" y="976" textLength="50" lengthAdjust="spacingAndGlyphs" class="n m f25">Free</text><rect x="2444" y="958" width="2" height="20" fill="#e6e8ee"/>
<use href="#fl" x="2457" y="958" width="16" height="20"/><text x="2479" y="976" textLength="262" lengthAdjust="spacingAndGlyphs" class="g f25">26 (Ξ0.0026≈$0.0026)</text>
<rect x="2280" y="994" width="720" height="2" fill="#f1f4f9"/>

<use href="#grp" transform="translate(2280 1060)"/>
<text x="2312" y="1081" textLength="115" lengthAdjust="spacingAndGlyphs" class="d f24">151222222</text>

<use href="#t-b" x="2280" y="1136" width="72" height="72"/>
<text x="2380" y="1165" textLength="177" lengthAdjust="spacingAndGlyphs" class="d f29">Collection121</text>
<rect x="2572" y="1141" width="50" height="31" rx="15.500" fill="#f1f4fd"/><text x="2584" y="1165" textLength="25" lengthAdjust="spacingAndGlyphs" class="b f25">x2</text>
<use href="#sh" x="2908" y="1132" width="48" height="48"/><use href="#cw" x="2968" y="1132" width="48" height="48"/>
<text x="2380" y="1209" textLength="50" lengthAdjust="spacingAndGlyphs" class="n m f25">Free</text><rect x="2444" y="1191" width="2" height="20" fill="#e6e8ee"/>
<text x="2456" y="1209" textLength="156" lengthAdjust="spacingAndGlyphs" class="g f25">WhitelistMint</text><rect x="2626" y="1191" width="2" height="20" fill="#e6e8ee"/>
<use href="#fl" x="2640" y="1191" width="16" height="20"/><text x="2661" y="1209" textLength="263" lengthAdjust="spacingAndGlyphs" class="g f25">26 (Ξ0.0026≈$0.0026)</text>

<use href="#t-k" x="2280" y="1276" width="72" height="72"/>
<text x="2380" y="1303" textLength="177" lengthAdjust="spacingAndGlyphs" class="d f29">Collection121</text>
<use href="#cw" x="2968" y="1276" width="48" height="48"/>
<text x="2381" y="1349" textLength="155" lengthAdjust="spacingAndGlyphs" class="g f25">WhitelistMint</text><rect x="2550" y="1331" width="2" height="20" fill="#e6e8ee"/>
<use href="#fl" x="2564" y="1331" width="16" height="20"/><text x="2586" y="1349" textLength="261" lengthAdjust="spacingAndGlyphs" class="g f25">26 (Ξ0.0026≈$0.0026)</text>

<rect x="2352" y="1458" width="620" height="2" fill="#f1f4f9"/>
<use href="#t-z" x="2280" y="1416" width="72" height="72"/>
<text x="2380" y="1443" textLength="177" lengthAdjust="spacingAndGlyphs" class="d f29">Collection121</text>
<use href="#pa" x="2578" y="1419" width="26" height="28"/>
<use href="#cw" x="2968" y="1416" width="48" height="48"/>
<text x="2380" y="1489" textLength="50" lengthAdjust="spacingAndGlyphs" class="n m f25">Free</text><rect x="2444" y="1471" width="2" height="20" fill="#e6e8ee"/>
<use href="#fl" x="2457" y="1471" width="16" height="20"/><text x="2479" y="1489" textLength="262" lengthAdjust="spacingAndGlyphs" class="g f25">26 (Ξ0.0026≈$0.0026)</text>

<use href="#grp" transform="translate(2280 1572)"/>
<text x="2312" y="1594" textLength="115" lengthAdjust="spacingAndGlyphs" class="d f24">151222222</text>

<use href="#t-b" x="2280" y="1644" width="72" height="72"/>
<text x="2380" y="1673" textLength="177" lengthAdjust="spacingAndGlyphs" class="d f29">Collection121</text>
<rect x="2572" y="1648" width="50" height="31" rx="15.500" fill="#f1f4fd"/><text x="2584" y="1673" textLength="25" lengthAdjust="spacingAndGlyphs" class="b f25">x2</text>
<use href="#cw" x="2968" y="1644" width="48" height="48"/>
<text x="2380" y="1717" textLength="50" lengthAdjust="spacingAndGlyphs" class="n m f25">Free</text><rect x="2444" y="1699" width="2" height="20" fill="#e6e8ee"/>
<use href="#fl" x="2457" y="1699" width="16" height="20"/><text x="2479" y="1717" textLength="262" lengthAdjust="spacingAndGlyphs" class="g f25">26 (Ξ0.0026≈$0.0026)</text>

<use href="#t-k" x="2280" y="1784" width="72" height="72"/>
<text x="2380" y="1811" textLength="177" lengthAdjust="spacingAndGlyphs" class="d f29">Collection121</text>
<use href="#cw" x="2968" y="1784" width="48" height="48"/>
<text x="2381" y="1857" textLength="155" lengthAdjust="spacingAndGlyphs" class="g f25">WhitelistMint</text><rect x="2550" y="1839" width="2" height="20" fill="#e6e8ee"/>
<use href="#fl" x="2564" y="1839" width="16" height="20"/><text x="2586" y="1857" textLength="261" lengthAdjust="spacingAndGlyphs" class="g f25">26 (Ξ0.0026≈$0.0026)</text>

<rect x="2352" y="1970" width="620" height="2" fill="#f1f4f9"/>
<use href="#t-z" x="2280" y="1924" width="72" height="72"/>
<text x="2380" y="1951" textLength="177" lengthAdjust="spacingAndGlyphs" class="d f29">Collection121</text>
<use href="#cw" x="2968" y="1924" width="48" height="48"/>
<text x="2380" y="1997" textLength="50" lengthAdjust="spacingAndGlyphs" class="n m f25">Free</text><rect x="2444" y="1979" width="2" height="20" fill="#e6e8ee"/>
<use href="#fl" x="2457" y="1979" width="16" height="20"/><text x="2479" y="1997" textLength="262" lengthAdjust="spacingAndGlyphs" class="g f25">26 (Ξ0.0026≈$0.0026)</text>

<!-- bottom fade + footer -->
<rect x="152" y="2040" width="2898" height="33" fill="url(#fade)"/>
<rect x="152" y="2073" width="2898" height="127" fill="#fff"/>
<text x="200" y="2146" textLength="57" lengthAdjust="spacingAndGlyphs" class="s f29">Max</text>
<text x="261" y="2146" textLength="28" lengthAdjust="spacingAndGlyphs" class="d f29">10</text>
<rect x="338" y="2104" width="172" height="68" rx="14" fill="#f1f4f9"/>
<rect x="346" y="2112" width="52" height="52" rx="9" fill="#fff"/>
<path d="M358 2141C358 2136 361 2134 363 2133L366 2127H378L381 2133C384 2134 386 2136 386 2141V2146H358Z" fill="#e2231f"/><path d="M367 2129H377L379 2134H365Z" fill="#5cb4d8"/><circle cx="364" cy="2146" r="3.500" fill="#333"/><circle cx="380" cy="2146" r="3.500" fill="#333"/>
<path d="M411 2140L424 2138L431 2133C435 2132 437 2134 435 2137L428 2142L420 2144L414 2146Z" fill="#5a9ae0"/><path d="M420 2137L415 2134L418 2134L426 2137Z" fill="#2a5a90"/><rect x="410" y="2148" width="18" height="5" fill="#666"/>
<path d="M490 2126C482 2127 474 2133 470 2143L474 2147C484 2145 490 2136 490 2126Z" fill="#b8cbe0"/><circle cx="481" cy="2136" r="3" fill="#a02020"/><path d="M470 2138L464 2142L469 2144ZM478 2146L475 2152L472 2147Z" fill="#e0402a"/><path d="M469 2146L464 2152L472 2149Z" fill="#f0b030"/>
<rect x="518" y="2104" width="68" height="68" rx="14" fill="#f1f4f9"/>
<text x="548" y="2146" textLength="12" lengthAdjust="spacingAndGlyphs" class="d f29">1</text>
<rect x="594" y="2104" width="68" height="68" rx="14" fill="#f1f4f9"/>
<text x="620" y="2146" textLength="15" lengthAdjust="spacingAndGlyphs" class="d f29">2</text>
<path transform="translate(689 2117) scale(1.750)" fill="#7788ac" d="M19.140 12.940c.04-.3.06-.61.06-.94s-.02-.64-.07-.94l2.030-1.580a.49.49 0 0 0 .12-.61l-1.920-3.320a.49.49 0 0 0-.59-.22l-2.390.96c-.5-.38-1.030-.7-1.620-.94l-.36-2.540A.48.48 0 0 0 13.920 2h-3.840c-.24 0-.43.17-.47.41l-.36 2.540c-.59.24-1.130.57-1.620.94l-2.390-.96a.48.48 0 0 0-.59.22L2.740 8.870a.48.48 0 0 0 .12.61l2.030 1.580c-.05.3-.09.63-.09.94s.02.64.07.94l-2.030 1.580a.49.49 0 0 0-.12.61l1.920 3.320c.12.22.37.29.59.22l2.390-.96c.5.38 1.030.7 1.620.94l.36 2.540c.05.24.24.41.48.41h3.840c.24 0 .44-.17.47-.41l.36-2.540c.59-.24 1.130-.56 1.620-.94l2.390.96c.22.08.47 0 .59-.22l1.920-3.320c.12-.22.07-.47-.12-.61l-2.010-1.580zM12 15.600A3.600 3.600 0 1 1 12 8.400a3.600 3.600 0 0 1 0 7.200z"/>
<text x="790" y="2146" textLength="26" lengthAdjust="spacingAndGlyphs" class="d f29">21</text>
<text x="821" y="2146" textLength="64" lengthAdjust="spacingAndGlyphs" class="s f29">gwei</text>
<text x="935" y="2146" textLength="70" lengthAdjust="spacingAndGlyphs" class="d f29">$1781</text>
<rect x="2832" y="2126" width="2" height="20" fill="#e6e8ee"/>
<use href="#tw" transform="translate(2895 2120) scale(1.730)" fill="#7788ac"/>
<use href="#dc" transform="translate(2982 2120) scale(1.500)" fill="#7788ac"/>
</svg>
</body></html>
